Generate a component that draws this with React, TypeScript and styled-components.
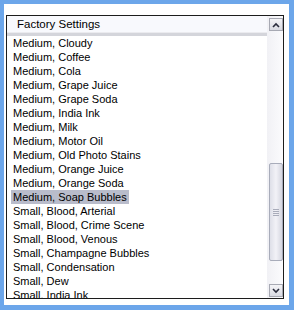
import styled, { createGlobalStyle } from "styled-components";

const GlobalStyle = createGlobalStyle`
  html, body {
    margin: 0;
    padding: 0;
    background: #6ca6ea;
  }
`;

const items = [
  "Medium, Cloudy",
  "Medium, Coffee",
  "Medium, Cola",
  "Medium, Grape Juice",
  "Medium, Grape Soda",
  "Medium, India Ink",
  "Medium, Milk",
  "Medium, Motor Oil",
  "Medium, Old Photo Stains",
  "Medium, Orange Juice",
  "Medium, Orange Soda",
  "Medium, Soap Bubbles",
  "Small, Blood, Arterial",
  "Small, Blood, Crime Scene",
  "Small, Blood, Venous",
  "Small, Champagne Bubbles",
  "Small, Condensation",
  "Small, Dew",
  "Small, India Ink",
];

const Panel = styled.div`
  box-sizing: border-box;
  margin: 4px 5px 5px 4px;
  width: 285px;
  height: 301px;
  background: #ffffff;
  padding: 11px 5px 6px 2px;
`;

const ListBox = styled.div`
  box-sizing: border-box;
  width: 278px;
  height: 284px;
  border: 1px solid #1c1c1c;
  display: flex;
  overflow: hidden;
  font-family: "Liberation Sans", sans-serif;
  font-size: 11px;
  color: #000;
`;

const Column = styled.div`
  flex: 1;
  display: flex;
  flex-direction: column;
  overflow: hidden;
`;

const Header = styled.div`
  height: 17px;
  flex: none;
  padding-left: 10px;
  line-height: 17px;
  font-size: 11.5px;
  background: #f8f9fd;
  border-bottom: 3px solid #d4d5db;
  box-shadow: inset 0 -1px 0 #ebebef;
`;

const Rows = styled.div`
  flex: 1;
  overflow: hidden;
  padding: 0 0 0 4px;
`;

const Row = styled.div`
  height: 14px;
  line-height: 14px;
  display: flex;
`;

const Label = styled.span<{ $selected?: boolean }>`
  padding: 0 2px;
  white-space: nowrap;
  background: ${(p) => (p.$selected ? "#b9bccb" : "transparent")};
`;

const ScrollBar = styled.div`
  width: 16px;
  flex: none;
  display: flex;
  flex-direction: column;
  align-items: flex-end;
  background: linear-gradient(to right, #f1f1f5, #fbfbfd);
  padding: 2px 0 1px;
  box-sizing: border-box;
`;

const ArrowButton = styled.div`
  box-sizing: border-box;
  width: 14px;
  height: 13px;
  flex: none;
  border: 1px solid #a7a9b3;
  background: linear-gradient(#f4f4f7, #d9dae2);
  display: flex;
  align-items: center;
  justify-content: center;
`;

const Track = styled.div`
  flex: 1;
  display: flex;
  flex-direction: column;
  width: 14px;
  padding-top: 132px;
`;

const Thumb = styled.div`
  box-sizing: border-box;
  width: 14px;
  height: 98px;
  border: 1px solid #a8acba;
  border-radius: 2px;
  background: linear-gradient(to right, #dedfe8, #f2f2f7 50%, #d5d6e0);
  display: flex;
  align-items: center;
  justify-content: center;
`;

function Chevron(props: { up?: boolean }) {
  return (
    <svg width="8" height="6" viewBox="0 0 8 6">
      <path
        d={props.up ? "M1 5 L4 2 L7 5" : "M1 1 L4 4 L7 1"}
        fill="none"
        stroke="#2a2c3c"
        strokeWidth="1.6"
      />
    </svg>
  );
}

function Grip() {
  return (
    <svg width="6" height="7" viewBox="0 0 6 7">
      {[0, 2, 4, 6].map((y) => (
        <line key={y} x1="0" y1={y + 0.5} x2="6" y2={y + 0.5} stroke="#a9acba" strokeWidth="1" />
      ))}
    </svg>
  );
}

export default function App() {
  return (
    <>
      <GlobalStyle />
      <Panel>
        <ListBox>
          <Column>
            <Header>Factory Settings</Header>
            <Rows>
              {items.map((item) => (
                <Row key={item}>
                  <Label $selected={item === "Medium, Soap Bubbles"}>{item}</Label>
                </Row>
              ))}
            </Rows>
          </Column>
          <ScrollBar>
            <ArrowButton>
              <Chevron up />
            </ArrowButton>
            <Track>
              <Thumb>
                <Grip />
              </Thumb>
            </Track>
            <ArrowButton>
              <Chevron />
            </ArrowButton>
          </ScrollBar>
        </ListBox>
      </Panel>
    </>
  );
}
